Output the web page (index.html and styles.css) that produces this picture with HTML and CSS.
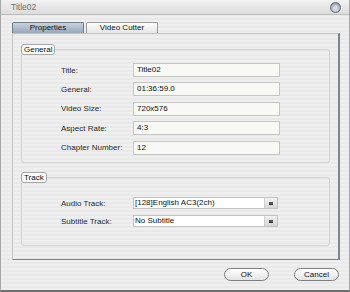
FILE: index.html
```html
<!DOCTYPE html>
<html lang="en">
<head>
    <meta charset="UTF-8">
    <title>Title02</title>
    <link rel="stylesheet" href="styles.css">
</head>
<body>
    <div class="window">
        <div class="titlebar">
            <span class="title">Title02</span>
            <span class="close-btn"></span>
        </div>

        <div class="content">
            <div class="tabs">
                <div class="tab active">Properties</div>
                <div class="tab">Video Cutter</div>
            </div>

            <div class="panel">
                <fieldset class="group general">
                    <legend>General</legend>
                    <div class="rows">
                        <label>Title:</label>
                        <div class="field">Title02</div>
                        <label>General:</label>
                        <div class="field">01:36:59.0</div>
                        <label>Video Size:</label>
                        <div class="field">720x576</div>
                        <label>Aspect Rate:</label>
                        <div class="field">4:3</div>
                        <label>Chapter Number:</label>
                        <div class="field">12</div>
                    </div>
                </fieldset>

                <fieldset class="group track">
                    <legend>Track</legend>
                    <div class="rows select-rows">
                        <label>Audio Track:</label>
                        <div class="select"><span>[128]English AC3(2ch)</span><span class="arrow"></span></div>
                        <label>Subtitle Track:</label>
                        <div class="select"><span>No Subtitle</span><span class="arrow"></span></div>
                    </div>
                </fieldset>
            </div>

            <div class="buttons">
                <button type="button">OK</button>
                <button type="button">Cancel</button>
            </div>
        </div>
    </div>
</body>
</html>
```

FILE: styles.css
```css
body {
    margin: 0;
    font-family: "Liberation Sans", Arial, sans-serif;
    font-size: 8px;
    color: #333;
}

.window {
    width: 350px;
    height: 292px;
    box-sizing: border-box;
    border-left: 1px solid #a8a8a8;
    border-right: 1px solid #a8a8a8;
    border-bottom: 2px solid #6e6e6e;
    background: repeating-linear-gradient(#efefef 0 2px, #e9e9e9 2px 4px);
}

.titlebar {
    height: 14px;
    display: flex;
    align-items: center;
    justify-content: space-between;
    padding: 0 8px 0 10px;
    background: linear-gradient(#f2f2f2, #dcdcdc);
    border-bottom: 1px solid #bdbdbd;
    color: #6e6e6e;
    font-size: 8.5px;
}

.close-btn {
    width: 9px;
    height: 9px;
    border-radius: 50%;
    border: 1px solid #6a6e74;
    background: radial-gradient(circle at 50% 60%, #d4dae2 0 30%, #8e98a4 75%);
}

.content {
    padding: 7px 9px 0 11px;
}

/* tabs */
.tabs {
    display: flex;
    gap: 2px;
    height: 11px;
}

.tab {
    width: 72px;
    box-sizing: border-box;
    border: 1px solid #9a9a9a;
    border-bottom: none;
    border-radius: 2px 2px 0 0;
    background: linear-gradient(#fdfdfd, #e6e6e6);
    text-align: center;
    line-height: 10px;
    color: #111;
}

.tab.active {
    background: linear-gradient(#c6d2de, #97a8ba);
    border-color: #6f7c8a;
}

.panel {
    height: 227px;
    box-sizing: border-box;
    border: 1px solid #c4c4c4;
    border-right: 2px solid #7c8594;
    border-bottom: 1px solid #7c8594;
    padding: 10px 8px 0 8px;
}

/* group boxes */
.group {
    margin: 0;
    border: 1px solid #d2d2d2;
    border-radius: 3px;
    padding: 0 0 9px 0;
}

.group legend {
    padding: 0 2px;
    margin-left: -1px;
    height: 9px;
    line-height: 9px;
    border: 1px solid #a6a6a6;
    border-radius: 3px;
    background: #fbfbfb;
    color: #111;
}

.general {
    height: 119px;
    box-sizing: border-box;
}

.track {
    margin-top: 9px;
    height: 74px;
    box-sizing: border-box;
}

.rows {
    display: grid;
    grid-template-columns: 72px 147px;
    grid-auto-rows: 14px;
    row-gap: 5.4px;
    align-items: center;
    margin: 8px 0 0 39px;
}

.rows label {
    color: #2a2a2a;
}

.field {
    height: 14px;
    box-sizing: border-box;
    border: 1px solid #c6c6c6;
    background: #f8f8f4;
    padding-left: 3px;
    line-height: 12px;
    color: #111;
}

.select-rows {
    grid-auto-rows: 12px;
    row-gap: 6px;
    margin-top: 14px;
    grid-template-columns: 72px 145px;
}

.select {
    height: 12px;
    box-sizing: border-box;
    border: 1px solid #c2c2c2;
    background: #fff;
    display: flex;
    justify-content: space-between;
    line-height: 10px;
    padding-left: 1px;
    color: #111;
}

.select .arrow {
    width: 12px;
    background: linear-gradient(#f2f2f2, #d6d6d6);
    border-left: 1px solid #d0d0d0;
    display: flex;
    align-items: center;
    justify-content: center;
}

.select .arrow::after {
    content: "";
    width: 4px;
    height: 2px;
    background: #555;
    border-bottom: 1px solid #333;
}

/* bottom buttons */
.buttons {
    display: flex;
    justify-content: flex-end;
    gap: 25px;
    margin-top: 8px;
    padding-right: 1px;
}

.buttons button {
    width: 45px;
    height: 13px;
    padding: 0;
    border: 1px solid #7e7e7e;
    border-radius: 7px;
    background: linear-gradient(#ffffff, #e4e4e4);
    font-family: "Liberation Sans", Arial, sans-serif;
    font-size: 8px;
    line-height: 11px;
    color: #111;
}
```
